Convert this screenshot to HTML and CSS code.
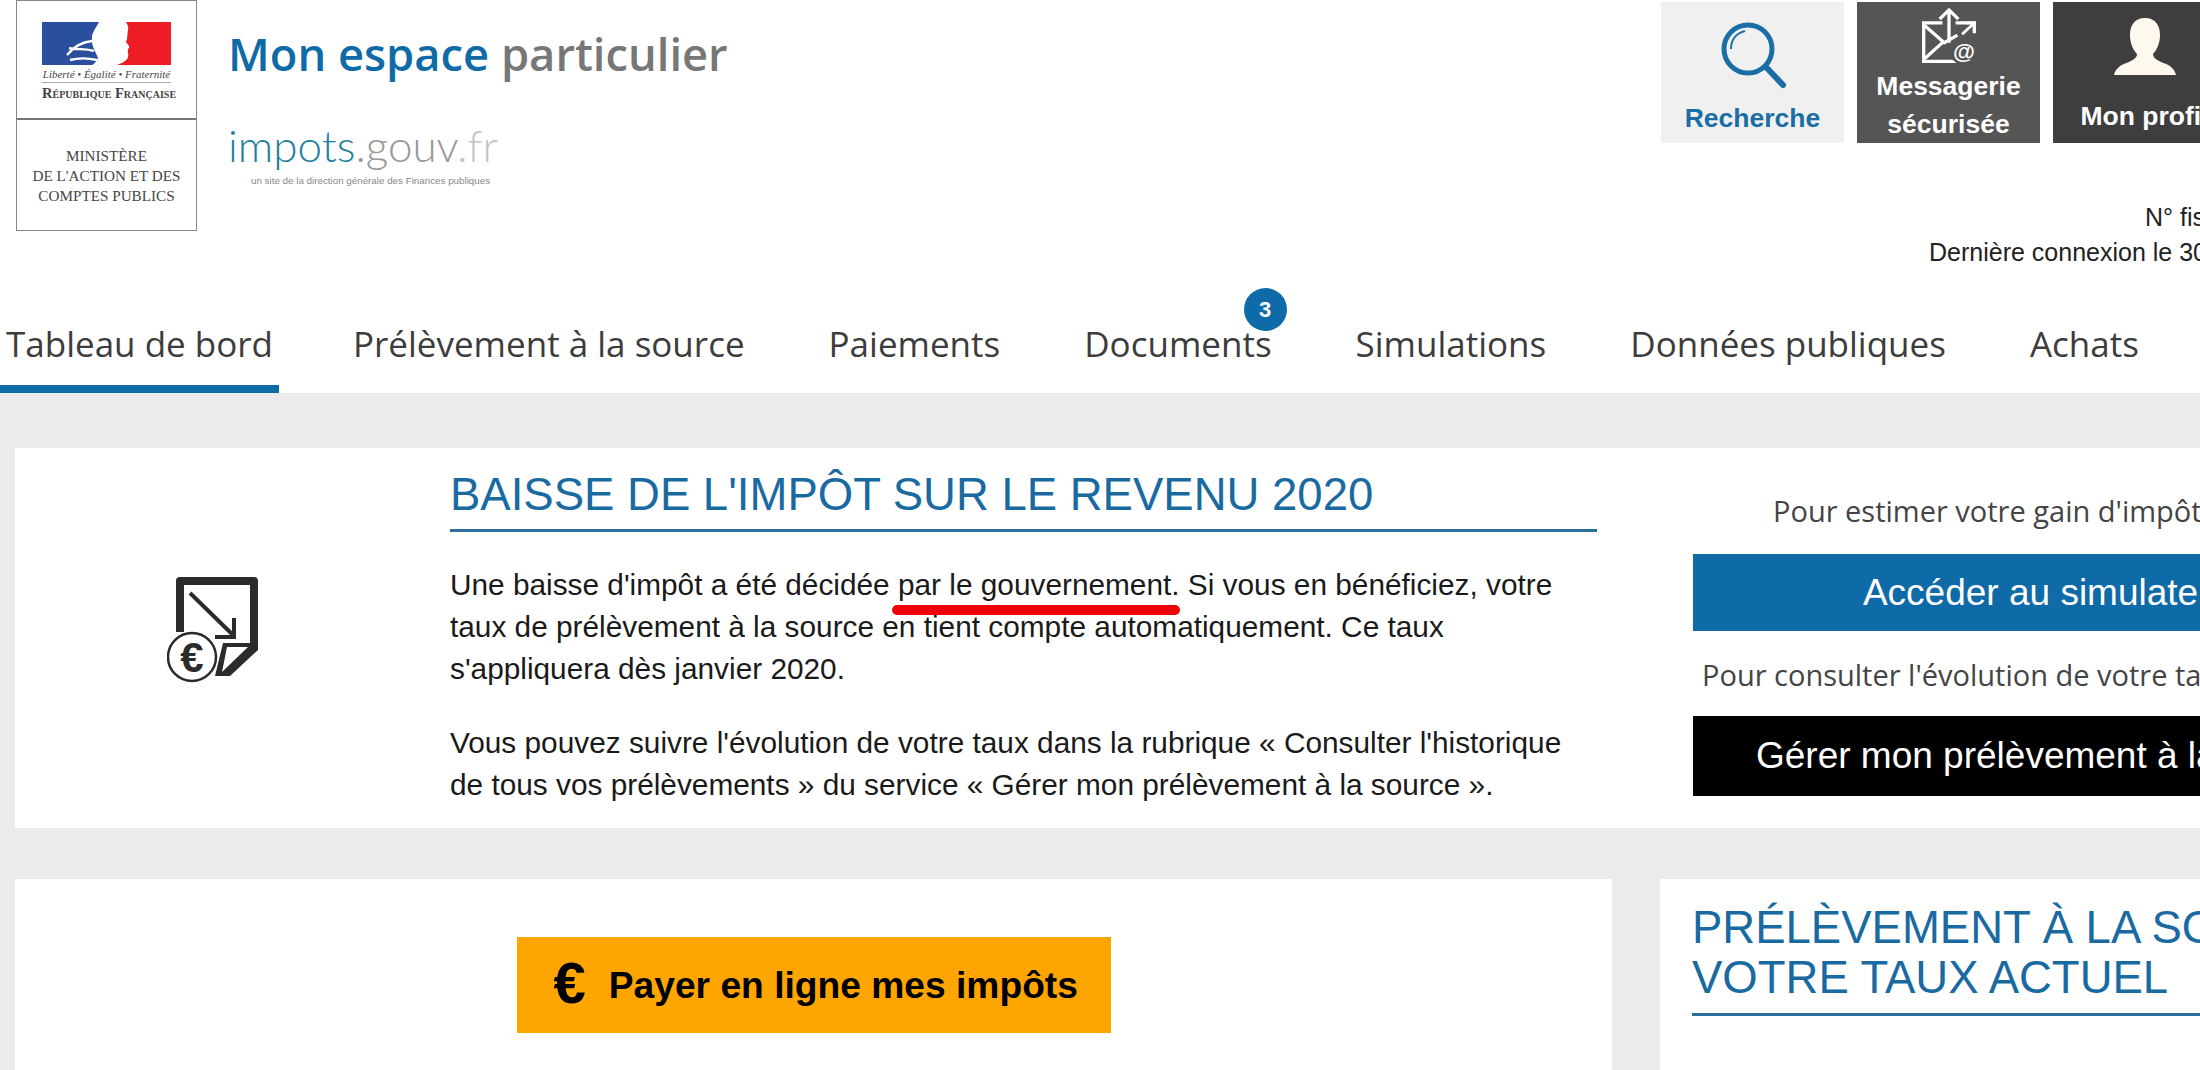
FILE: index.html
```html
<!DOCTYPE html>
<html lang="fr">
<head>
  <meta charset="UTF-8" />
  <title>Mon espace particulier | impots.gouv.fr</title>
  <link rel="stylesheet" href="styles.css">
</head>
<body>
  <div class="page">
    <header class="top">
      <div class="logo-box">
        <div class="logo-rf">
          <svg class="flag" viewBox="0 0 129 43" width="129" height="43">
            <path fill="#2a4f9f" d="M0 0H57C54 6 50 10 50 16C49 24 54 30 56 36C55 39 52 42 50 43H0Z"/>
            <path fill="#ee1c25" d="M84 0H129V43H75C80 41 85 39 86 35C87 32 85 30 86 27C89 25 86 23 84 20C86 16 85 12 86 8C87 5 85 2 84 0Z"/>
            <path fill="none" stroke="#fff" stroke-width="2.4" d="M25 33C32 24 40 20 50 19M27 26C34 28 44 26 52 29M28 38C36 36 46 36 55 38"/>
          </svg>
          <div class="devise">Liberté • Égalité • Fraternité</div>
          <div class="republique">République Française</div>
        </div>
        <div class="logo-min">MINISTÈRE<br>DE L'ACTION ET DES<br>COMPTES PUBLICS</div>
      </div>
      <div class="brand">
        <div class="brand-title"><span class="blue">Mon espace</span> particulier</div>
        <div class="brand-site"><span class="site-a">impots</span><span class="site-b">.gouv</span><span class="site-c">.fr</span></div>
        <div class="brand-sub">un site de la direction générale des Finances publiques</div>
      </div>
      <div class="account">
        <div class="tiles">
          <a class="tile tile-search">
            <svg width="70" height="76" viewBox="0 0 70 76" fill="none" stroke="#1a6ea5">
              <circle cx="30" cy="30" r="24" stroke-width="5"/>
              <path d="M13 30C13 20 19 14 27 12" stroke-width="2"/>
              <path d="M48 48L65 66" stroke-width="6" stroke-linecap="round"/>
            </svg>
            <span>Recherche</span>
          </a>
          <a class="tile tile-mail">
            <svg width="64" height="68" viewBox="0 0 62 64" fill="none" stroke="#fff" stroke-width="3.5">
              <path d="M24 17H4V58H40"/>
              <path d="M38 17H58V28"/>
              <path d="M4 19L26 38L40 30M4 56L24 38"/>
              <path d="M31 38V3M21 13L31 3L41 13" stroke-linejoin="round"/>
              <path d="M45 29L58 17M49 17H58V26" stroke-width="3"/>
              <circle cx="47" cy="47" r="15" fill="#555" stroke="none"/>
              <text x="47" y="55" class="at" text-anchor="middle" stroke="none" fill="#fff">@</text>
            </svg>
            <span>Messagerie<br>sécurisée</span>
          </a>
          <a class="tile tile-profile">
            <svg width="62" height="58" viewBox="0 0 62 58">
              <path fill="#fff8ef" d="M31 0C20 0 16 8 16 17C16 25 19 32 23 36C23 41 17 43 10 46C5 48 1 52 0 57H62C61 52 57 48 52 46C45 43 39 41 39 36C43 32 46 25 46 17C46 8 42 0 31 0Z"/>
            </svg>
            <span>Mon profil</span>
          </a>
        </div>
        <div class="fiscal">N° fiscal</div>
        <div class="last-login">Dernière connexion le 30</div>
      </div>
    </header>

    <nav class="menu">
      <a class="menu-item active">Tableau de bord</a>
      <a class="menu-item">Prélèvement à la source</a>
      <a class="menu-item">Paiements</a>
      <a class="menu-item">Documents<span class="badge">3</span></a>
      <a class="menu-item">Simulations</a>
      <a class="menu-item">Données publiques</a>
      <a class="menu-item">Achats</a>
    </nav>

    <main class="content">
      <section class="card card-news">
        <div class="news-icon">
          <svg width="94" height="112" viewBox="0 0 94 112" fill="none" stroke="#2b2b2b">
            <path d="M13 60V9H87V72" stroke-width="8" stroke-linejoin="round"/>
            <path d="M91 68V78L63 104H48L56 71H91Z" fill="#2b2b2b" stroke="none"/>
            <path d="M60 75H81L55 100Z" fill="#fff" stroke="none"/>
            <path d="M23 21L66 63" stroke-width="4"/>
            <path d="M48 65H67V46" stroke-width="4"/>
            <circle cx="25" cy="85" r="24" stroke-width="2.5" fill="#fff"/>
            <text x="25" y="100" class="euro-glyph" text-anchor="middle" fill="#2b2b2b" stroke="none">€</text>
          </svg>
        </div>
        <div class="news-body">
          <h2 class="title">BAISSE DE L'IMPÔT SUR LE REVENU 2020</h2>
          <p>Une baisse d'impôt a été décidée <span class="marked">par le gouvernement.<span class="marker"></span></span> Si vous en bénéficiez, votre taux de prélèvement à la source en tient compte automatiquement. Ce taux s'appliquera dès janvier 2020.</p>
          <p>Vous pouvez suivre l'évolution de votre taux dans la rubrique « Consulter l'historique de tous vos prélèvements » du service « Gérer mon prélèvement à la source ».</p>
        </div>
        <div class="news-side">
          <div class="side-text side-first">Pour estimer votre gain d'impôt</div>
          <a class="btn btn-blue">Accéder au simulateur</a>
          <div class="side-text side-second">Pour consulter l'évolution de votre taux</div>
          <a class="btn btn-black">Gérer mon prélèvement à la source</a>
        </div>
      </section>

      <div class="columns">
        <section class="card card-pay">
          <a class="btn-pay"><span class="pay-euro">€</span>Payer en ligne mes impôts</a>
        </section>
        <section class="card card-rate">
          <h2 class="title title-rate">PRÉLÈVEMENT À LA SOURCE<br>VOTRE TAUX ACTUEL</h2>
        </section>
      </div>
    </main>
  </div>
</body>
</html>
```

FILE: styles.css
```css
html, body {
  margin: 0;
  padding: 0;
  height: 100%;
  overflow: hidden;
  background: #ebebeb;
}

body {
  font-family: "Liberation Sans", Arial, sans-serif;
  color: #1a1a1a;
}

a {
  text-decoration: none;
}

.page {
  width: 2420px;
}

/* header */
.top {
  display: flex;
  height: 260px;
  background: #fff;
  box-sizing: border-box;
  padding-left: 16px;
}

.logo-box {
  width: 181px;
  height: 231px;
  flex: none;
  box-sizing: border-box;
  border: 1px solid #888;
  font-family: "Liberation Serif", serif;
  color: #444;
  text-align: center;
}

.logo-rf {
  height: 119px;
  box-sizing: border-box;
  padding: 21px 25px 0;
  border-bottom: 2px solid #777;
}

.flag {
  display: block;
}

.devise {
  font-size: 11px;
  font-style: italic;
  line-height: 15px;
  margin-top: 2px;
  border-bottom: 1px solid #aaa;
  white-space: nowrap;
}

.republique {
  font-size: 14.5px;
  font-variant: small-caps;
  font-weight: bold;
  line-height: 20px;
  white-space: nowrap;
}

.logo-min {
  font-size: 15.2px;
  line-height: 20px;
  margin-top: 26px;
}

.brand {
  width: 1464px;
  flex: none;
  box-sizing: border-box;
  padding-left: 31px;
}

.brand-title {
  font-family: "Open Sans", sans-serif;
  font-weight: 600;
  font-size: 45.3px;
  line-height: 60px;
  margin-top: 24px;
  color: #777;
}

.blue {
  color: #0f6ba8;
}

.brand-site {
  font-family: "Lato", sans-serif;
  font-weight: 300;
  font-size: 44px;
  line-height: 60px;
  margin-top: 31px;
}

.site-a {
  color: #1f7f9e;
}

.site-b {
  color: #999;
}

.site-c {
  color: #c4c4c4;
}

.brand-sub {
  font-size: 9.8px;
  line-height: 12px;
  color: #888;
  margin-left: 23px;
}

.account {
  width: 576px;
  flex: none;
}

.tiles {
  display: flex;
  gap: 13px;
  padding-top: 2px;
}

.tile {
  width: 183px;
  height: 141px;
  box-sizing: border-box;
  display: flex;
  flex-direction: column;
  align-items: center;
  font-weight: bold;
  font-size: 26.5px;
  text-align: center;
  color: #fff;
}

.tile-search {
  background: #f0f0f0;
  color: #1a6ea5;
  padding-top: 17px;
  line-height: 46px;
}

.tile-mail {
  background: #555;
  padding-top: 5px;
  line-height: 38px;
}

.tile-profile {
  background: #3e3e3e;
  padding-top: 16px;
  line-height: 46px;
  white-space: nowrap;
}

.tile-profile svg {
  margin-bottom: 17px;
}

.at {
  font-family: "Liberation Sans", sans-serif;
  font-size: 24px;
}

.fiscal,
.last-login {
  font-size: 25px;
  line-height: 35px;
  color: #222;
  white-space: nowrap;
}

.fiscal {
  margin: 57px 0 0 484px;
}

.last-login {
  margin-left: 268px;
}

/* main menu */
.menu {
  display: flex;
  height: 133px;
  align-items: flex-end;
  gap: 72px;
  background: #fff;
}

.menu-item {
  font-family: "Open Sans", sans-serif;
  font-size: 35px;
  line-height: 46px;
  padding: 0 6px 26px;
  color: #3c3c3c;
  white-space: nowrap;
  position: relative;
}

.menu-item.active {
  border-bottom: 8px solid #0f6aa8;
  padding-bottom: 18px;
  margin-right: -4px;
}

.badge {
  position: absolute;
  top: -33px;
  right: -9px;
  width: 43px;
  height: 43px;
  border-radius: 50%;
  background: #0f6aa8;
  color: #fff;
  font-family: "Liberation Sans", sans-serif;
  font-weight: bold;
  font-size: 22px;
  line-height: 43px;
  text-align: center;
}

/* cards */
.content {
  padding: 55px 0 0 15px;
}

.card {
  background: #fff;
}

.card-news {
  display: flex;
  height: 380px;
}

.news-icon {
  width: 435px;
  flex: none;
  box-sizing: border-box;
  padding: 124px 0 0 152px;
}

.news-body {
  width: 1147px;
  flex: none;
  font-size: 29.8px;
  line-height: 42px;
}

.news-body p {
  margin: 0 0 32px;
}

.title {
  margin: 0;
  font-weight: normal;
  font-size: 45.5px;
  color: #1a6aa2;
  line-height: 50px;
  border-bottom: 3px solid #2a6f9e;
}

.news-body .title {
  padding: 22px 0 9px;
  margin-bottom: 32px;
}

.marked {
  position: relative;
}

.marker {
  position: absolute;
  left: -6px;
  right: 0;
  bottom: -14px;
  height: 10px;
  border-radius: 5px;
  background: #ee0008;
}

.euro-glyph {
  font-family: "Liberation Sans", sans-serif;
  font-size: 42px;
  font-weight: bold;
}

.news-side {
  margin-left: 96px;
  width: 708px;
  flex: none;
}

.side-text {
  font-family: "Open Sans", sans-serif;
  font-size: 29px;
  line-height: 40px;
  color: #444;
  white-space: nowrap;
}

.side-first {
  margin-top: 43px;
  margin-bottom: 23px;
  padding-left: 80px;
}

.side-second {
  margin-top: 24px;
  margin-bottom: 21px;
  padding-left: 9px;
}

.btn {
  display: block;
  font-size: 37px;
  color: #fff;
  text-align: center;
  white-space: nowrap;
}

.btn-blue {
  background: #0f6aa8;
  line-height: 77px;
}

.btn-black {
  background: #000;
  line-height: 80px;
}

.columns {
  display: flex;
  gap: 48px;
  margin-top: 51px;
}

.card-pay {
  width: 1597px;
  height: 191px;
  flex: none;
  display: flex;
  justify-content: center;
  align-items: flex-start;
  padding-top: 58px;
  box-sizing: border-box;
}

.btn-pay {
  width: 594px;
  height: 96px;
  box-sizing: border-box;
  background: #ffa500;
  color: #000;
  font-weight: bold;
  font-size: 37.2px;
  display: flex;
  align-items: center;
  padding-left: 37px;
  white-space: nowrap;
}

.pay-euro {
  font-size: 58px;
  margin: 0 23px 6px 0;
}

.card-rate {
  width: 760px;
  height: 191px;
  flex: none;
  padding: 24px 0 0 32px;
  box-sizing: border-box;
}

.title-rate {
  white-space: nowrap;
  padding-bottom: 10px;
}
```
